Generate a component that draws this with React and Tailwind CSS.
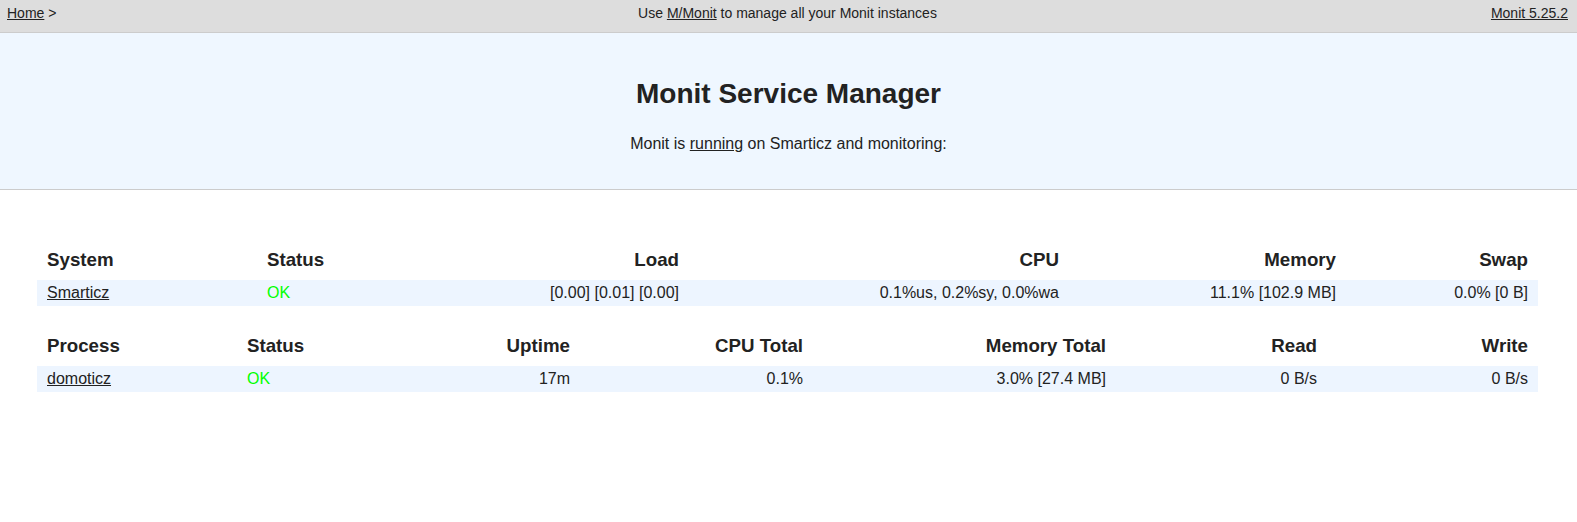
export default function App() {
  const font = { fontFamily: '"Liberation Sans", Arial, sans-serif' };
  return (
    <div className="min-h-[522px] bg-white text-[#222]" style={font}>
      <div className="flex h-[33px] items-start justify-between border-b border-[#ccc] bg-[#ddd] pl-[7px] pr-[9px] pt-[5px] text-[14px] leading-[16px]">
        <div className="w-[300px]">
          <a className="underline" href="#">Home</a> &gt;
        </div>
        <div>
          Use <a className="underline" href="#">M/Monit</a> to manage all your Monit instances
        </div>
        <div className="w-[300px] text-right">
          <a className="underline" href="#">Monit 5.25.2</a>
        </div>
      </div>
      <div className="flex h-[157px] flex-col items-center border-b border-[#ccc] bg-[#EFF7FF]">
        <h1 className="mt-[45px] text-[28px] font-bold leading-[32px]">Monit Service Manager</h1>
        <p className="mt-[25px] text-[16px] leading-[18px]">
          Monit is <a className="underline" href="#">running</a> on Smarticz and monitoring:
        </p>
      </div>

      <div className="mx-[37px] w-[1501px] pt-[58px]">
        <div className="grid h-[32px] grid-cols-[220px_210px_222px_380px_277px_192px] items-start pt-[1px] text-[18.72px] font-bold leading-[22px]">
          <div className="px-[10px]">System</div>
          <div className="px-[10px]">Status</div>
          <div className="px-[10px] text-right">Load</div>
          <div className="px-[10px] text-right">CPU</div>
          <div className="px-[10px] text-right">Memory</div>
          <div className="px-[10px] text-right">Swap</div>
        </div>
        <div className="grid h-[26px] grid-cols-[220px_210px_222px_380px_277px_192px] items-center bg-[#EDF5FF] text-[16px]">
          <div className="px-[10px]"><a className="underline" href="#">Smarticz</a></div>
          <div className="px-[10px] text-[#00ff00]">OK</div>
          <div className="px-[10px] text-right">[0.00] [0.01] [0.00]</div>
          <div className="px-[10px] text-right">0.1%us, 0.2%sy, 0.0%wa</div>
          <div className="px-[10px] text-right">11.1% [102.9 MB]</div>
          <div className="px-[10px] text-right">0.0% [0 B]</div>
        </div>

        <div className="mt-[28px] grid h-[32px] grid-cols-[200px_170px_173px_233px_303px_211px_211px] items-start pt-[1px] text-[18.72px] font-bold leading-[22px]">
          <div className="px-[10px]">Process</div>
          <div className="px-[10px]">Status</div>
          <div className="px-[10px] text-right">Uptime</div>
          <div className="px-[10px] text-right">CPU Total</div>
          <div className="px-[10px] text-right">Memory Total</div>
          <div className="px-[10px] text-right">Read</div>
          <div className="px-[10px] text-right">Write</div>
        </div>
        <div className="grid h-[26px] grid-cols-[200px_170px_173px_233px_303px_211px_211px] items-center bg-[#EDF5FF] text-[16px]">
          <div className="px-[10px]"><a className="underline" href="#">domoticz</a></div>
          <div className="px-[10px] text-[#00ff00]">OK</div>
          <div className="px-[10px] text-right">17m</div>
          <div className="px-[10px] text-right">0.1%</div>
          <div className="px-[10px] text-right">3.0% [27.4 MB]</div>
          <div className="px-[10px] text-right">0 B/s</div>
          <div className="px-[10px] text-right">0 B/s</div>
        </div>
      </div>
    </div>
  );
}
